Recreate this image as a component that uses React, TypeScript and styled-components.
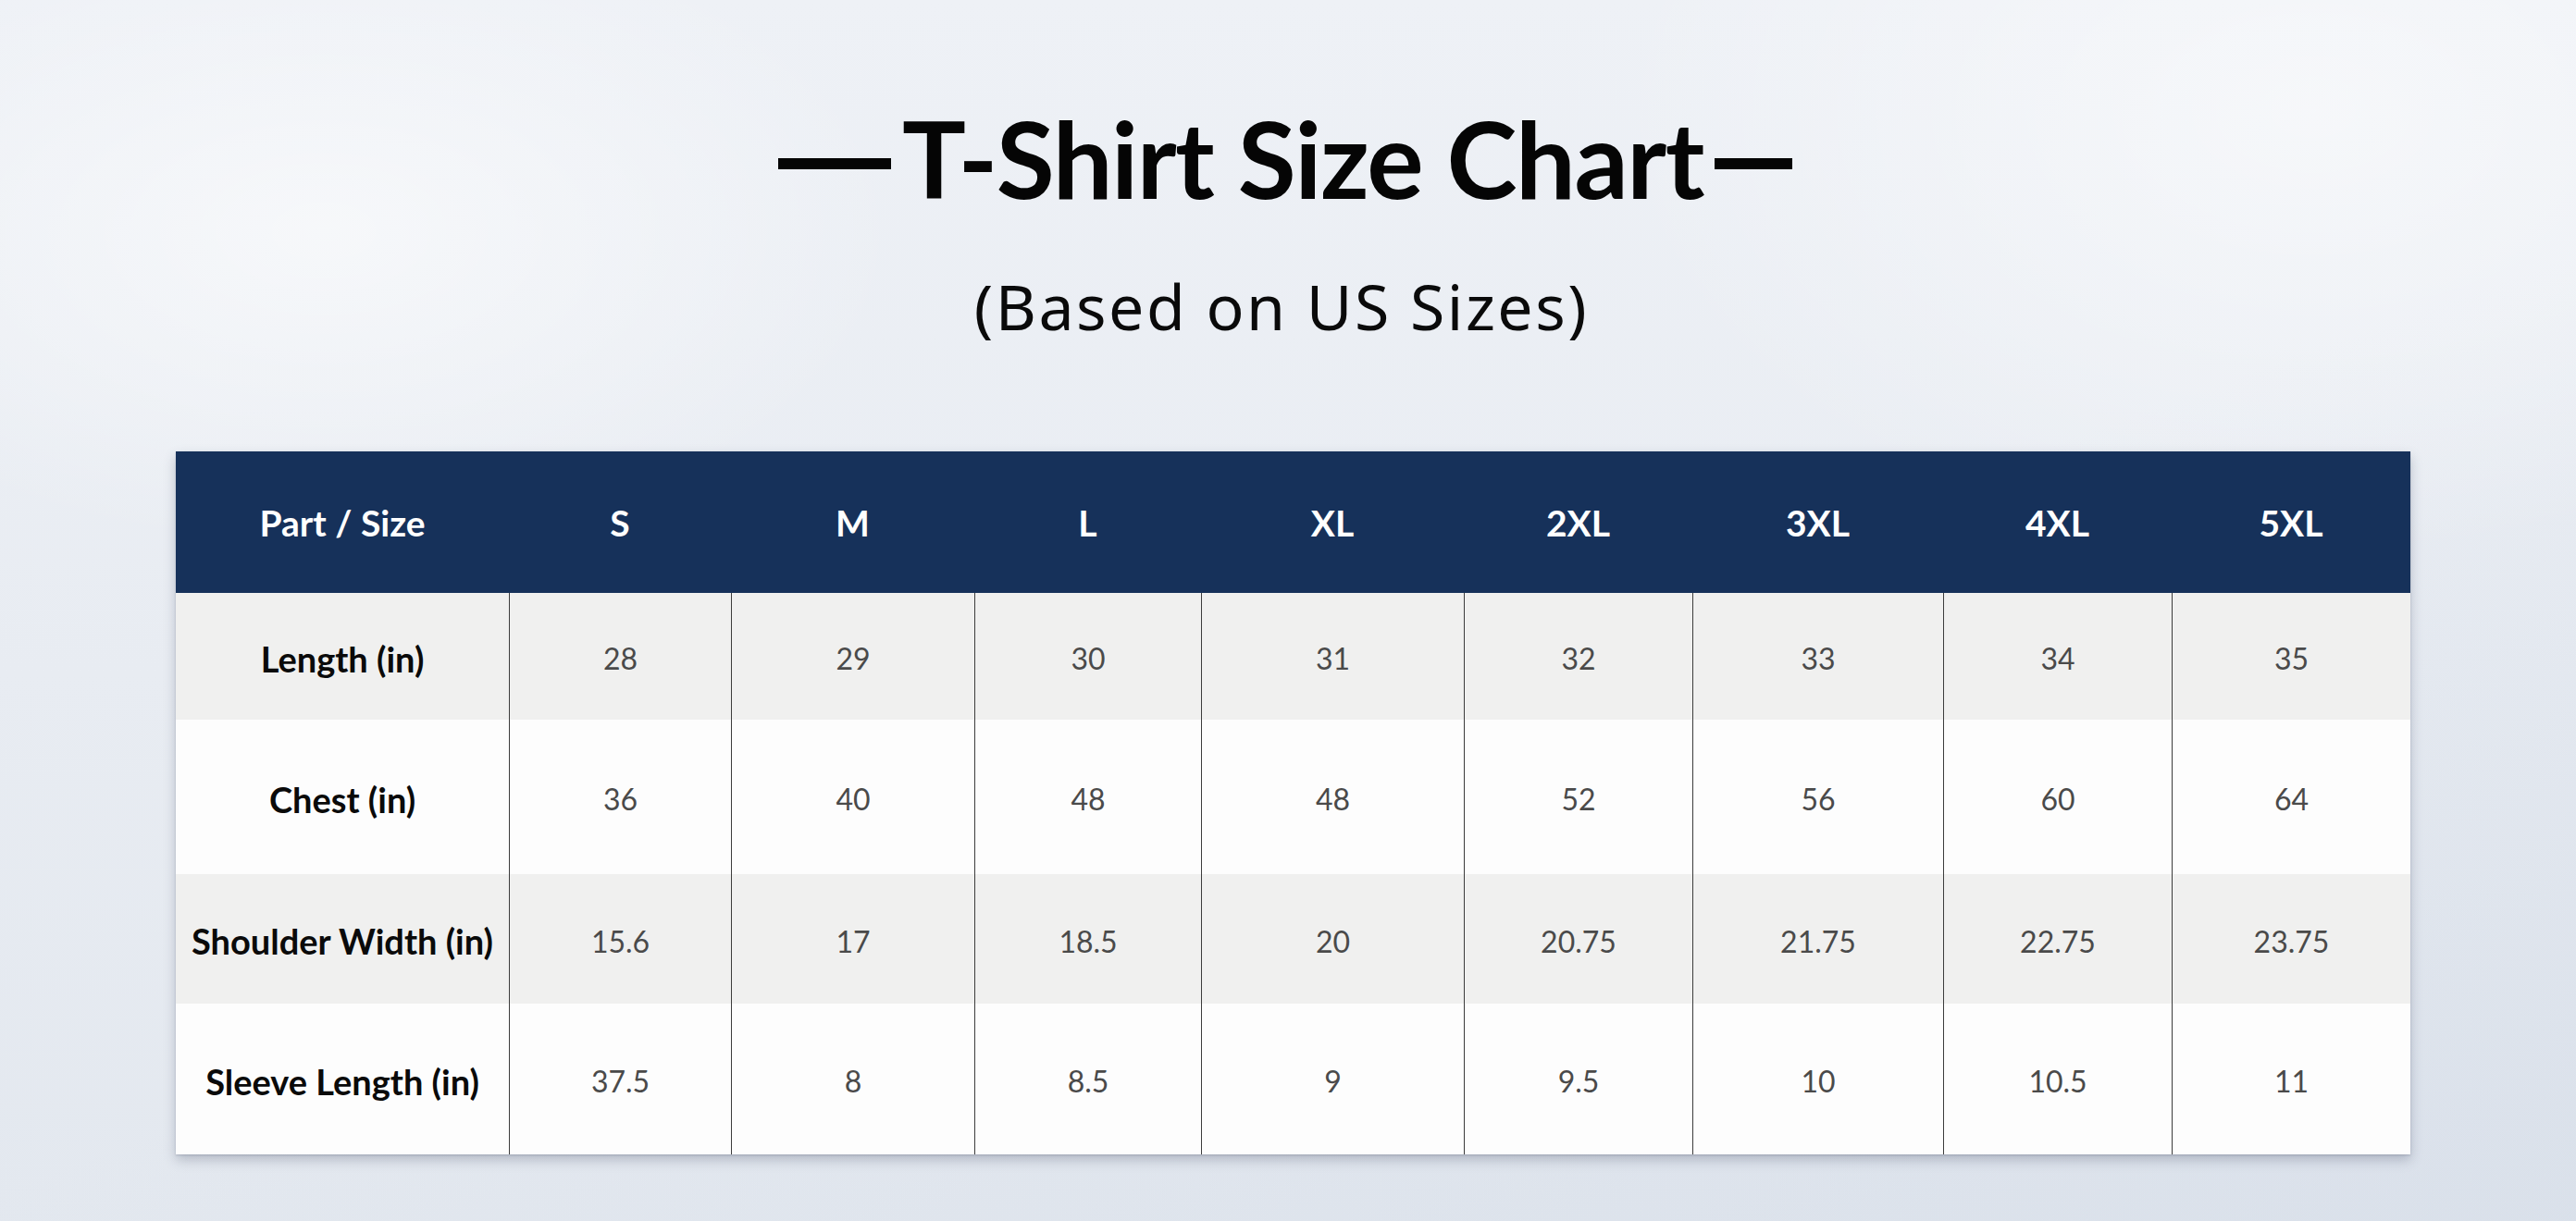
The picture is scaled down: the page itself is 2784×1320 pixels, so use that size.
import React from "react";
import styled, { createGlobalStyle } from "styled-components";

const GlobalStyle = createGlobalStyle`
  html, body {
    margin: 0;
    padding: 0;
    width: 2784px;
    height: 1320px;
    overflow: hidden;
  }
  body {
    font-family: "Lato", "Noto Sans", sans-serif;
    background: #e9edf3;
  }
`;

const Page = styled.main`
  width: 2784px;
  height: 1320px;
  box-sizing: border-box;
  padding-top: 101px;
  display: flex;
  flex-direction: column;
  align-items: center;
  background:
    radial-gradient(ellipse 900px 500px at 350px 250px, rgba(255,255,255,0.55), rgba(255,255,255,0) 70%),
    radial-gradient(ellipse 1100px 700px at 2500px 120px, rgba(255,255,255,0.5), rgba(255,255,255,0) 70%),
    linear-gradient(160deg, rgba(255,255,255,0) 55%, rgba(200,210,225,0.35) 100%),
    linear-gradient(180deg, #eef1f6 0%, #e8ecf2 55%, #e3e8ef 100%);
`;

const Title = styled.h1`
  margin: 0;
  display: flex;
  align-items: center;
  gap: 12px;
  font-family: "Lato", sans-serif;
  font-weight: 700;
  font-size: 115px;
  line-height: 138px;
  color: #050505;
  letter-spacing: -1.5px;
  margin-left: -6px;

  &::before,
  &::after {
    content: "";
    display: block;
    height: 12px;
    background: #050505;
    margin-top: 14px;
  }
  &::before {
    width: 122px;
  }
  &::after {
    width: 84px;
  }
`;

const Subtitle = styled.p`
  margin: 52px 0 0;
  font-family: "Noto Sans", sans-serif;
  font-weight: 400;
  font-size: 68px;
  line-height: 80px;
  letter-spacing: 2.5px;
  color: #0a0a0a;
  margin-left: -14px;
`;

const Table = styled.div`
  align-self: flex-start;
  margin-left: 190px;
  margin-top: 117px;
  display: grid;
  grid-template-columns: 360px 240px 263px 245px 284px 247px 271px 247px 258px;
  grid-template-rows: 153px 137px 167px 140px 163px;
  background: #fdfdfd;
  box-shadow: 0 6px 12px rgba(60, 70, 95, 0.28), 0 1px 2px rgba(60, 70, 95, 0.2);
`;

const HeadCell = styled.div`
  display: flex;
  align-items: center;
  justify-content: center;
  background: #16315a;
  color: #ffffff;
  font-family: "Lato", sans-serif;
  font-weight: 700;
  font-size: 39px;
`;

const Cell = styled.div<{ $shade: boolean; $label?: boolean; $first?: boolean }>`
  display: flex;
  align-items: center;
  justify-content: center;
  box-sizing: border-box;
  padding-top: 4px;
  background: ${(p) => (p.$shade ? "#f0f0ef" : "#fdfdfd")};
  border-left: ${(p) => (p.$first ? "none" : "1.5px solid #3c3c3c")};
  font-family: "Lato", sans-serif;
  font-weight: ${(p) => (p.$label ? 700 : 400)};
  font-size: ${(p) => (p.$label ? "38px" : "32px")};
  color: ${(p) => (p.$label ? "#0a0a0a" : "#4a4a4a")};
  white-space: nowrap;
`;

const sizes = ["S", "M", "L", "XL", "2XL", "3XL", "4XL", "5XL"];

const rows: { label: string; values: string[] }[] = [
  { label: "Length (in)", values: ["28", "29", "30", "31", "32", "33", "34", "35"] },
  { label: "Chest (in)", values: ["36", "40", "48", "48", "52", "56", "60", "64"] },
  {
    label: "Shoulder Width (in)",
    values: ["15.6", "17", "18.5", "20", "20.75", "21.75", "22.75", "23.75"],
  },
  {
    label: "Sleeve Length (in)",
    values: ["37.5", "8", "8.5", "9", "9.5", "10", "10.5", "11"],
  },
];

export default function App() {
  return (
    <>
      <GlobalStyle />
      <Page>
        <Title>T-Shirt Size Chart</Title>
        <Subtitle>(Based on US Sizes)</Subtitle>
        <Table>
          <HeadCell>Part / Size</HeadCell>
          {sizes.map((s) => (
            <HeadCell key={s}>{s}</HeadCell>
          ))}
          {rows.map((r, i) => (
            <React.Fragment key={r.label}>
              <Cell $shade={i % 2 === 0} $label $first>
                {r.label}
              </Cell>
              {r.values.map((v, j) => (
                <Cell key={j} $shade={i % 2 === 0}>
                  {v}
                </Cell>
              ))}
            </React.Fragment>
          ))}
        </Table>
      </Page>
    </>
  );
}
